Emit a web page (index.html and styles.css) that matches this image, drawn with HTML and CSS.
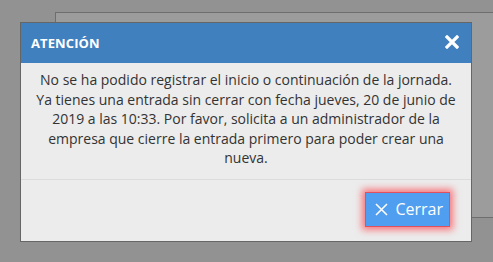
FILE: index.html
```html
<!DOCTYPE html>
<html lang="es">
<head>
<meta charset="utf-8">
<title>Atención</title>
<link rel="stylesheet" href="styles.css">
</head>
<body>
<div class="page-panel"></div>
<div class="modal" role="dialog" aria-labelledby="modal-title">
  <div class="modal-header">
    <h4 class="modal-title" id="modal-title">ATENCIÓN</h4>
    <button class="modal-close" aria-label="Cerrar">
      <svg width="14" height="14" viewBox="0 0 14 14"><path d="M2 2 L12 12 M12 2 L2 12" stroke="#fff" stroke-width="3.2" stroke-linecap="square" fill="none"/></svg>
    </button>
  </div>
  <div class="modal-body">
    <p>No se ha podido registrar el inicio o continuación de la jornada. Ya tienes una entrada sin cerrar con fecha jueves, 20 de junio de 2019 a las 10:33. Por favor, solicita a un administrador de la empresa que cierre la entrada primero para poder crear una nueva.</p>
  </div>
  <div class="modal-footer">
    <button class="btn-close">
      <svg width="13" height="13" viewBox="0 0 13 13"><path d="M1 1 L12 12 M12 1 L1 12" stroke="#fff" stroke-width="1.6" fill="none"/></svg>
      <span>Cerrar</span>
    </button>
  </div>
</div>
</body>
</html>
```

FILE: styles.css
```css
html, body {
  margin: 0;
  padding: 0;
}
body {
  width: 493px;
  height: 262px;
  overflow: hidden;
  background: #929292;
  font-family: "Open Sans", "DejaVu Sans", sans-serif;
  position: relative;
}
.page-panel {
  margin: 12px 0 0 55px;
  height: 204px;
  border: 1px solid #6e6e6e;
  border-right: none;
  background: #9c9c9c;
}
.modal {
  position: absolute;
  left: 20px;
  top: 22px;
  width: 450px;
  border: 1px solid #666;
  background: #ececec;
}
.modal-header {
  height: 40px;
  background: #4180bf;
  display: flex;
  align-items: center;
  justify-content: space-between;
  padding: 0 12px 0 10px;
}
.modal-title {
  margin: 0;
  color: #fff;
  font-size: 13px;
  font-weight: 700;
  letter-spacing: 0.1px;
}
.modal-close {
  background: none;
  border: none;
  padding: 0;
  width: 14px;
  height: 14px;
  display: flex;
  margin-top: -2px;
}
.modal-body {
  padding: 7px 14px 11px;
  border-bottom: 1px solid #dcdcdc;
}
.modal-body p {
  margin: 0;
  text-align: center;
  color: #333;
  font-size: 14px;
  line-height: 19.5px;
}
.modal-footer {
  display: flex;
  justify-content: flex-end;
  padding: 12px 21px 14px;
}
.btn-close {
  height: 35px;
  display: flex;
  align-items: center;
  gap: 7px;
  padding: 0 6px 0 9px;
  background: #4f9ef0;
  border: 1px solid #e0505e;
  color: #fff;
  font-family: "Open Sans", "DejaVu Sans", sans-serif;
  font-size: 16px;
  box-shadow: 0 0 7px 3px rgba(255, 40, 50, 0.6);
}
.btn-close svg {
  display: block;
}
```
